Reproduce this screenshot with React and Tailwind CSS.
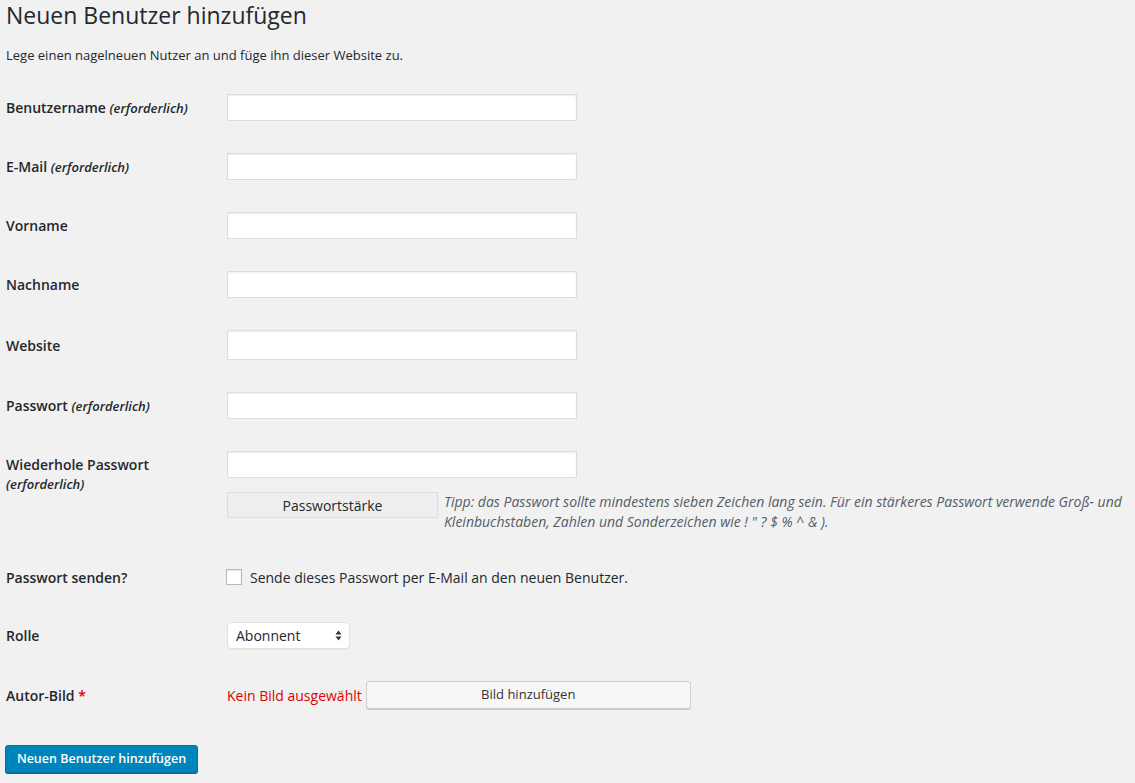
import React, { useState } from 'react';

const Label = ({ children, className = '' }) => (
  <div className={`w-[221px] shrink-0 text-[14px] font-semibold leading-[19px] text-[#23282d] ${className}`}>
    {children}
  </div>
);

const Req = () => <em className="text-[13px] font-semibold italic">(erforderlich)</em>;

const TextInput = ({ tall = false }) => (
  <input
    type="text"
    className={`w-[350px] ${tall ? 'h-[30px]' : 'h-[27px]'} border border-[#dddddd] bg-white shadow-[inset_0_1px_2px_rgba(0,0,0,0.07)] outline-none`}
  />
);

const App = () => {
  const [send, setSend] = useState(false);

  return (
    <div className="min-h-screen bg-[#f1f1f1] pl-[6px] text-[#23282d]" style={{ fontFamily: '"Open Sans", "Noto Sans", sans-serif' }}>
      <h1 className="pt-[1px] text-[23px] font-normal leading-[29px]">Neuen Benutzer hinzufügen</h1>
      <p className="mt-[15px] text-[13px] leading-[20px]">Lege einen nagelneuen Nutzer an und füge ihn dieser Website zu.</p>

      <div className="mt-[13px]">
        <div className="flex items-center py-4">
          <Label>Benutzername <Req /></Label>
          <TextInput />
        </div>
        <div className="flex items-center py-4">
          <Label>E-Mail <Req /></Label>
          <TextInput />
        </div>
        <div className="flex items-center py-4">
          <Label>Vorname</Label>
          <TextInput />
        </div>
        <div className="flex items-center py-4">
          <Label>Nachname</Label>
          <TextInput />
        </div>
        <div className="flex items-center py-4">
          <Label>Website</Label>
          <TextInput tall />
        </div>
        <div className="flex items-center py-4">
          <Label>Passwort <Req /></Label>
          <TextInput />
        </div>
        <div className="flex items-start py-4">
          <Label className="pt-[4px]">
            Wiederhole Passwort
            <br />
            <Req />
          </Label>
          <div className="flex-1 pr-[10px]">
            <TextInput />
            <div className="mt-[14px] flex items-start gap-[6px]">
              <div className="flex h-[26px] w-[211px] shrink-0 items-center justify-center border border-[#dddddd] bg-[#eeeeee] text-[14px]">
                Passwortstärke
              </div>
              <p className="text-[14px] italic leading-[20px] text-[#555d66]">
                Tipp: das Passwort sollte mindestens sieben Zeichen lang sein. Für ein stärkeres Passwort verwende Groß- und Kleinbuchstaben, Zahlen und Sonderzeichen wie ! " ? $ % ^ &amp; ).
              </p>
            </div>
          </div>
        </div>
        <div className="flex h-[58px] items-center py-4">
          <Label>Passwort senden?</Label>
          <label className="flex items-center gap-[8px] text-[14px]">
            <span
              onClick={() => setSend(!send)}
              className="-ml-[1px] flex h-4 w-4 items-center justify-center border border-[#b4b9be] bg-white shadow-[inset_0_1px_2px_rgba(0,0,0,0.1)]"
            >
              {send && <span className="text-[12px] leading-none text-[#1e8cbe]">✓</span>}
            </span>
            Sende dieses Passwort per E-Mail an den neuen Benutzer.
          </label>
        </div>
        <div className="flex items-center py-4">
          <Label>Rolle</Label>
          <div className="flex h-[27px] w-[123px] items-center justify-between rounded-[4px] border border-[#e2e2e2] bg-white pl-[8px] pr-[7px] text-[14px] shadow-[0_1px_1px_rgba(0,0,0,0.04)]">
            <span>Abonnent</span>
            <svg width="7" height="11" viewBox="0 0 7 11" className="text-[#333]">
              <path d="M3.5 0.5 L6.5 4.5 H0.5 Z" fill="currentColor" />
              <path d="M3.5 10.5 L6.5 6.5 H0.5 Z" fill="currentColor" />
            </svg>
          </div>
        </div>
        <div className="flex items-center py-4">
          <Label>
            Autor-Bild <span className="text-[#dd0000]">*</span>
          </Label>
          <span className="text-[14px] text-[#e00000]">Kein Bild ausgewählt</span>
          <button className="ml-[4px] h-[28px] w-[325px] rounded-[3px] border border-[#cccccc] bg-[#f7f7f7] text-[13px] text-[#333] shadow-[0_1px_0_#cccccc]">
            Bild hinzufügen
          </button>
        </div>
      </div>

      <button className="-ml-[1px] mt-[20px] h-[28px] w-[193px] rounded-[3px] border border-[#0073aa] bg-[#0085ba] text-[12.5px] font-semibold text-white shadow-[0_1px_0_#006799]">
        Neuen Benutzer hinzufügen
      </button>
    </div>
  );
};

export default App;
